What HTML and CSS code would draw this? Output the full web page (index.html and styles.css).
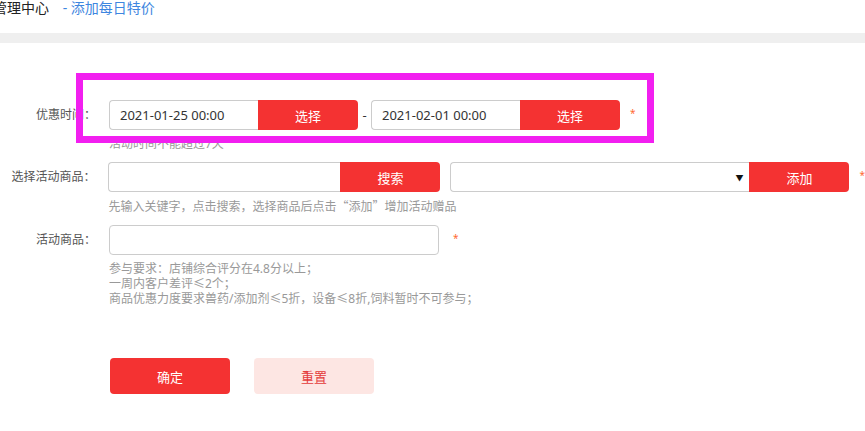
FILE: index.html
```html
<!DOCTYPE html>
<html lang="zh-CN">
<head>
    <meta charset="UTF-8">
    <meta name="viewport" content="width=device-width, initial-scale=1.0">
    <title>添加每日特价</title>
    <link rel="stylesheet" href="styles.css">
</head>
<body>
    <div class="topbar">
        <span class="crumb">管理中心</span>
        <span class="crumb-sub">- 添加每日特价</span>
    </div>
    <div class="divider"></div>

    <form class="form">
        <div class="row">
            <label class="label">优惠时间：</label>
            <div class="field">
                <div class="controls">
                    <div class="combo">
                        <input class="text date" type="text" value="2021-01-25 00:00" />
                        <button type="button" class="btn-red">选择</button>
                    </div>
                    <span class="dash">-</span>
                    <div class="combo">
                        <input class="text date" type="text" value="2021-02-01 00:00" />
                        <button type="button" class="btn-red">选择</button>
                    </div>
                    <span class="req">*</span>
                </div>
                <div class="hint">活动时间不能超过7天</div>
            </div>
        </div>

        <div class="row">
            <label class="label">选择活动商品：</label>
            <div class="field">
                <div class="controls">
                    <div class="combo">
                        <input class="text keyword" type="text" />
                        <button type="button" class="btn-red">搜索</button>
                    </div>
                    <div class="combo gap">
                        <div class="select"><span class="arrow">▼</span></div>
                        <button type="button" class="btn-red">添加</button>
                    </div>
                    <span class="req">*</span>
                </div>
                <div class="hint">先输入关键字，点击搜索，选择商品后点击<span class="cjk">“添加”</span>增加活动赠品</div>
            </div>
        </div>

        <div class="row">
            <label class="label">活动商品：</label>
            <div class="field">
                <div class="controls">
                    <input class="text goods" type="text" />
                    <span class="req wide">*</span>
                </div>
                <div class="hint">
                    参与要求：店铺综合评分在4.8分以上；<br />
                    一周内客户差评≤2个；<br />
                    商品优惠力度要求兽药/添加剂≤5折，设备≤8折,饲料暂时不可参与；
                </div>
            </div>
        </div>

        <div class="actions">
            <button type="submit" class="btn-ok">确定</button>
            <button type="reset" class="btn-reset">重置</button>
        </div>
    </form>

    <div class="highlight"></div>
</body>
</html>
```

FILE: styles.css
```css
body {
    margin: 0;
    width: 865px;
    height: 431px;
    overflow: hidden;
    background-color: #fff;
    font-family: "Noto Sans", "Noto Sans CJK SC", sans-serif;
    color: #333;
    position: relative;
}

.topbar {
    height: 16px;
    line-height: 16px;
    font-size: 14px;
    margin-left: -7px;
    white-space: nowrap;
}

.crumb {
    color: #222;
}

.crumb-sub {
    color: #3d86e0;
    margin-left: 10px;
}

.divider {
    margin-top: 17px;
    height: 10px;
    background-color: #efefef;
}

.form {
    padding-top: 57px;
}

.row {
    display: flex;
    align-items: flex-start;
    margin-bottom: 11px;
}

.label {
    width: 96px;
    line-height: 30px;
    font-size: 12px;
    color: #555;
    text-align: right;
    margin-right: 13px;
}

.controls {
    display: flex;
    align-items: center;
    height: 30px;
}

.combo {
    display: flex;
    height: 30px;
}

.combo.gap {
    margin-left: 10px;
}

.text {
    box-sizing: border-box;
    height: 30px;
    margin: 0;
    padding: 0 10px;
    border: 1px solid #ccc;
    border-radius: 4px;
    font-family: inherit;
    font-size: 13px;
    color: #333;
    outline: none;
}

.combo .text,
.combo .select {
    border-right: none;
    border-radius: 4px 0 0 4px;
}

.date {
    width: 149px;
}

.keyword {
    width: 232px;
}

.goods {
    width: 330px;
}

.select {
    box-sizing: border-box;
    width: 299px;
    height: 30px;
    border: 1px solid #ccc;
    display: flex;
    align-items: center;
    justify-content: flex-end;
    padding-right: 6px;
}

.arrow {
    font-size: 8px;
    color: #111;
}

.btn-red {
    width: 100px;
    height: 30px;
    margin: 0;
    border: none;
    border-radius: 0 4px 4px 0;
    background-color: #f43232;
    color: #fff;
    font-family: inherit;
    font-size: 13px;
}

.dash {
    width: 13px;
    text-align: center;
    font-size: 13px;
    color: #333;
}

.req {
    margin-left: 10px;
    font-size: 10px;
    color: #ff6a33;
    margin-top: -4px;
}

.req.wide {
    margin-left: 14px;
}

.hint {
    margin-top: 6px;
    font-size: 12px;
    line-height: 15px;
    color: #999;
}

.cjk {
    font-family: "Noto Sans CJK SC", sans-serif;
}

.actions {
    display: flex;
    gap: 24px;
    padding-left: 110px;
    padding-top: 41px;
}

.btn-ok,
.btn-reset {
    width: 120px;
    height: 36px;
    border: none;
    border-radius: 4px;
    font-family: inherit;
    font-size: 13px;
}

.btn-ok {
    background-color: #f43232;
    color: #fff;
}

.btn-reset {
    background-color: #fde6e3;
    color: #e43a3a;
}

/* annotation frame drawn over the date row */
.highlight {
    position: absolute;
    left: 76px;
    top: 73px;
    width: 564px;
    height: 56px;
    border: 7px solid #f21ff0;
}
```
